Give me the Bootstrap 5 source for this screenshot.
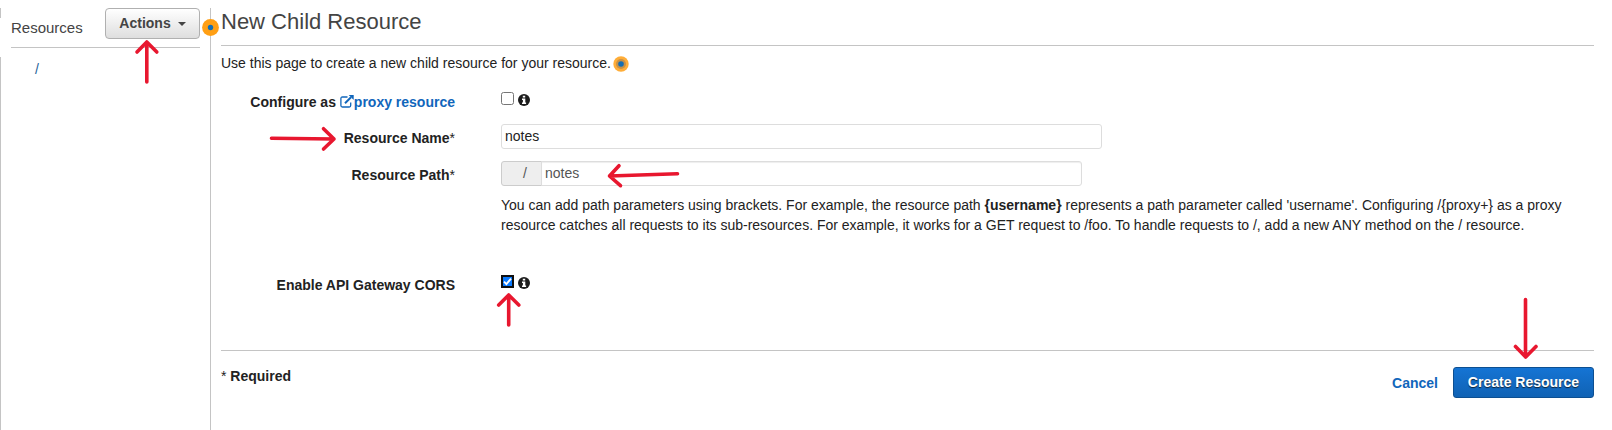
<!DOCTYPE html>
<html lang="en">
<head>
<meta charset="utf-8">
<title>New Child Resource</title>
<link href="https://cdn.jsdelivr.net/npm/bootstrap@5.3.0/dist/css/bootstrap.min.css" rel="stylesheet">
<style>
body{font-family:"Liberation Sans",Arial,sans-serif;font-size:14px;line-height:20px;color:#222;background:#fff;height:430px;overflow:hidden}
.tree-pane{width:211px;height:422px;margin-top:8px;border-right:1px solid #c4c4c4}
.tree-head{height:40px;margin:0 10px 0 11px;border-bottom:1px solid #c4c4c4}
.tree-title{font-size:15px;color:#444;padding-top:10px}
.edge{width:1px;background:#c4c4c4;left:0}
.edge-a{top:8px;height:10px}.edge-b{top:57px;bottom:0}
.btn-menu{width:95px;height:31px;font-size:14px;font-weight:700;color:#444;padding:0;border:1px solid #b0b0b0;border-radius:4px;background:linear-gradient(#fff,#dedede);line-height:27px}
.btn-menu::after{margin-left:7px;vertical-align:2px;border-width:4px 4px 0}
.tree-item{color:#1f5f99;padding:11px 0 0 35px}
.main-pane{margin:0 18px 0 10px}
.page-title{font-size:22px;line-height:26px;height:46px;padding-top:9px;margin:0;color:#444;border-bottom:1px solid #c4c4c4;font-weight:400}
.intro{height:46px;padding-top:7px}
.pulse-small{margin:3px 0 0 2px}
.form-label-col{width:234px;text-align:right;font-weight:700;margin-right:46px}
.form-label-col .star{font-weight:400}
a{color:#1166bb;text-decoration:none}
.check-row{height:32px}
.form-check-input{width:13px;height:13px;margin:0;border:1px solid #767676;border-radius:2.5px!important}
.info-icon{margin:2px 0 0 4px}
.field{height:25px;padding:0 4px 2px 3px;font-size:14px;line-height:20px;border:1px solid #ddd;border-radius:3px;color:#222}
.field-name{width:601px}
.path-group{width:581px;height:25px}
.path-group .field{color:#555;box-shadow:inset 0 1px 1px #eee}
.path-group .input-group-text{width:41px;padding:0 14px 2px 0;justify-content:flex-end;font-size:14px;background:#eee;border:1px solid #ccc;border-radius:3px;color:#555;line-height:20px}
.help{width:1085px;margin:9px 0 0 280px;height:40px}
.cors-row{margin-top:40px;height:75px}
.footer-bar{height:79px;border-top:1px solid #c4c4c4}
.required-note{padding-top:15px}
.actions{padding-top:16px;gap:15px}
.btn-create{width:141px;height:31px;padding:0;font-size:14px;font-weight:700;line-height:27px;color:#fff!important;border:1px solid #0d4f91;border-radius:3px;background:linear-gradient(#1574d4,#1062b4);text-shadow:0 1px 1px #123}
.marks{left:0;top:0;pointer-events:none}
.pulse{left:202px;top:19px}
</style>
</head>
<body class="position-relative">
<div class="d-flex align-items-start">
  <aside class="tree-pane flex-shrink-0">
    <div class="tree-head d-flex justify-content-between align-items-start">
      <span class="tree-title">Resources</span>
      <button class="btn btn-menu dropdown-toggle" type="button">Actions</button>
    </div>
    <div class="tree-item">/</div>
  </aside>
  <main class="main-pane flex-grow-1">
    <h1 class="page-title">New Child Resource</h1>
    <div class="intro d-flex">
      <span>Use this page to create a new child resource for your resource.</span>
      <svg width="16" height="16" class="pulse-small"><circle cx="8" cy="8" r="7.7" fill="#ffad38"/><circle cx="8" cy="8" r="5" fill="#c99145"/><circle cx="8" cy="8" r="2.8" fill="#146eb4"/></svg>
    </div>
    <form>
      <div class="check-row d-flex">
        <label class="form-label-col">Configure as <a href="#"><svg width="14" height="13" viewBox="0 0 14 13" fill="none" stroke="#1166bb" stroke-width="1.3" style="vertical-align:-1px"><path d="M7.5 2H2.4Q.9 2 .9 3.5V10.5Q.9 12 2.4 12H9.2Q10.7 12 10.7 10.5V7.5"/><path d="M5 8.2 11 2.2" stroke-width="2"/><path d="M8.7 0H13.7V5Z" fill="#1166bb" stroke="none"/></svg>proxy resource</a></label>
        <div class="d-flex align-items-start"><input class="form-check-input" type="checkbox" aria-label="Proxy resource">
        <svg class="info-icon" width="12" height="12" viewBox="0 0 12 12"><circle cx="6" cy="6" r="6" fill="#1c1c1c"/><path fill="#fff" d="M4.800 1.700h2.400v1.900H4.800zM4 4.500h3.300v4H8.100v1.400H4V8.500h.9V5.900H4z"/></svg></div>
      </div>
      <div class="d-flex align-items-start mb-2 pb-1">
        <label class="form-label-col pt-1">Resource Name<span class="star">*</span></label>
        <input class="form-control field field-name" value="notes" aria-label="Resource name">
      </div>
      <div class="d-flex align-items-start">
        <label class="form-label-col pt-1">Resource Path<span class="star">*</span></label>
        <div class="input-group path-group"><span class="input-group-text">/</span><input class="form-control field" value="notes" aria-label="Resource path"></div>
      </div>
      <div class="help">You can add path parameters using brackets. For example, the resource path <b>{username}</b> represents a path parameter called 'username'. Configuring /{proxy+} as a proxy resource catches all requests to its sub-resources. For example, it works for a GET request to /foo. To handle requests to /, add a new ANY method on the / resource.</div>
      <div class="cors-row d-flex">
        <label class="form-label-col">Enable API Gateway CORS</label>
        <div class="d-flex align-items-start"><svg width="13" height="13" role="img" aria-label="CORS enabled"><path fill="#101010" d="M0 0h13v13H0z"/><path fill="#0a7aff" d="M2 2h9v9H2z"/><path d="m3 6.700 2.400 2.400L10 3.600" fill="none" stroke="#fff" stroke-width="1.900"/></svg>
        <svg class="info-icon" width="12" height="12" viewBox="0 0 12 12"><circle cx="6" cy="6" r="6" fill="#1c1c1c"/><path fill="#fff" d="M4.800 1.700h2.400v1.900H4.800zM4 4.500h3.300v4H8.100v1.400H4V8.500h.9V5.900H4z"/></svg></div>
      </div>
      <div class="footer-bar d-flex justify-content-between align-items-start">
        <div class="required-note">* <b>Required</b></div>
        <div class="d-flex align-items-center actions"><a href="#" class="fw-bold">Cancel</a><button type="button" class="btn btn-create">Create Resource</button></div>
      </div>
    </form>
  </main>
</div>
<span class="edge edge-a position-absolute"></span><span class="edge edge-b position-absolute"></span>
<svg class="pulse position-absolute" width="17" height="17"><circle cx="8.500" cy="8.500" r="8.400" fill="#ff9f14"/><circle cx="8.500" cy="8.500" r="2.700" fill="#146eb4"/></svg>
<svg class="marks position-absolute" width="1612" height="430" fill="none" stroke="#e8172f" stroke-width="3.600" stroke-linecap="round" stroke-linejoin="round">
<path d="M146.800 82V42M137 52 146.800 42 156.800 52"/>
<path d="M271.500 138.300 334 139M323.500 128.700 334 139 323.500 149"/>
<path d="M677.500 173.800 609.500 176M619 165.700 609.500 176 620.500 185.700"/>
<path d="M508.700 325V295M498.700 305 508.700 295 518.800 305"/>
<path d="M1525.500 299.500V357M1515.500 346.500 1525.700 357 1536 346.500"/>
</svg>
<script src="https://cdn.jsdelivr.net/npm/bootstrap@5.3.0/dist/js/bootstrap.bundle.min.js"></script>
</body>
</html>
